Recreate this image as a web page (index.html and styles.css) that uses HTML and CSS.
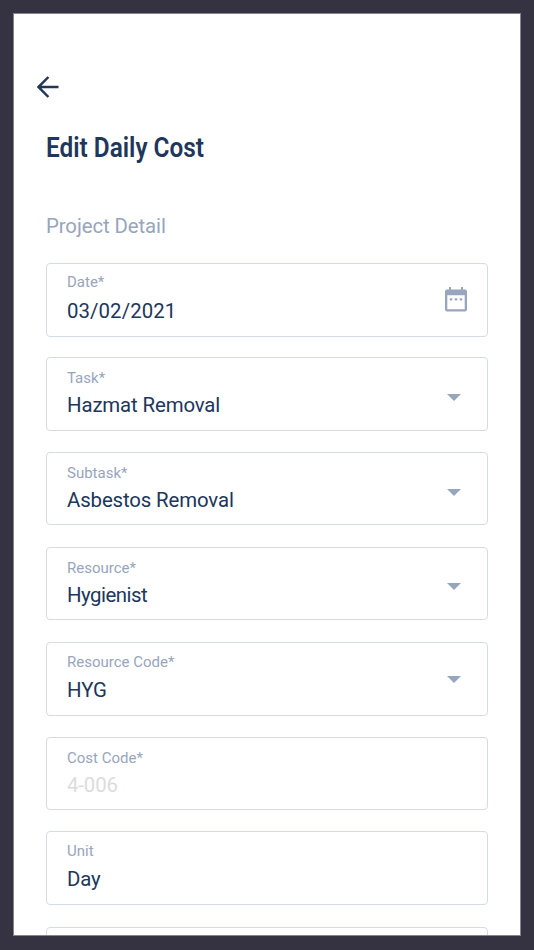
FILE: index.html
```html
<!DOCTYPE html>
<html lang="en">
<head>
  <meta charset="UTF-8">
  <meta name="viewport" content="width=device-width, initial-scale=1.0">
  <title>Edit Daily Cost</title>
  <link rel="stylesheet" href="styles.css">
</head>
<body>
  <main class="screen">
    <a class="back" aria-label="Back">
      <svg width="22" height="22" viewBox="0 0 22 22"><path d="M11.4 1L1.6 11l9.8 10M2 11h19.5" fill="none" stroke="#20365b" stroke-width="2.5"/></svg>
    </a>
    <h1><span class="title">Edit Daily Cost</span></h1>
    <h2>Project Detail</h2>

    <div class="fields">
      <div class="field date">
        <div class="label">Date*</div>
        <div class="value">03/02/2021</div>
        <svg class="calendar" width="22" height="25" viewBox="0 0 22 25">
          <path fill="#97a5bd" fill-rule="evenodd" d="M4 0h2v2.500h10v-2.500h2v2.500h2a2 2 0 0 1 2 2v18a2 2 0 0 1-2 2h-18a2 2 0 0 1-2-2v-18a2 2 0 0 1 2-2h2zM2.300 8.200v14.100h17.400v-14.100zM4.800 11.200h2.400v2.400h-2.400zM9.800 11.200h2.400v2.400h-2.400zM14.800 11.200h2.400v2.400h-2.400z"/>
        </svg>
      </div>
      <div class="field task">
        <div class="label">Task*</div>
        <div class="value">Hazmat Removal</div>
        <span class="arrow"></span>
      </div>
      <div class="field subtask">
        <div class="label">Subtask*</div>
        <div class="value">Asbestos Removal</div>
        <span class="arrow"></span>
      </div>
      <div class="field resource">
        <div class="label">Resource*</div>
        <div class="value">Hygienist</div>
        <span class="arrow"></span>
      </div>
      <div class="field code">
        <div class="label">Resource Code*</div>
        <div class="value">HYG</div>
        <span class="arrow"></span>
      </div>
      <div class="field cost">
        <div class="label">Cost Code*</div>
        <div class="value disabled">4-006</div>
      </div>
      <div class="field unit">
        <div class="label">Unit</div>
        <div class="value">Day</div>
      </div>
      <div class="field last"></div>
    </div>
  </main>
</body>
</html>
```

FILE: styles.css
```css
* {
  box-sizing: border-box;
}
body {
  margin: 0;
  height: 950px;
  padding: 13px 13px 14px;
  background-color: #353241;
  font-family: Roboto, sans-serif;
  overflow: hidden;
}
.screen {
  height: 923px;
  padding: 62px 32px 0;
  background-color: #fff;
  border: 1px solid #85848e;
  overflow: hidden;
}
.back {
  display: block;
  width: 22px;
  height: 22px;
  margin-left: -9px;
}
h1 {
  margin: 33px 0 0;
  height: 34px;
  font-size: 28px;
  line-height: 34px;
  font-weight: 600;
  color: #20365b;
  white-space: nowrap;
}
.title {
  display: inline-block;
  transform: scaleX(0.87);
  transform-origin: left;
}
h2 {
  margin: 48px 0 0;
  height: 26px;
  font-size: 20.4px;
  line-height: 26px;
  letter-spacing: -0.1px;
  font-weight: 400;
  color: #97a5bd;
}
.fields {
  margin-top: 24px;
}
.field {
  position: relative;
  height: 74px;
  margin-top: 21px;
  padding: 11px 20px 0;
  border: 1px solid #d5dae5;
  border-radius: 4px;
}
.label {
  height: 24px;
  font-size: 15px;
  line-height: 18px;
  color: #97a5bd;
}
.value {
  font-size: 20.4px;
  line-height: 24px;
  letter-spacing: -0.13px;
  color: #20365b;
}
.disabled {
  color: #dcdcdc;
}
.date {
  margin-top: 0;
}
.date .value {
  letter-spacing: 0.08px;
}
.task {
  margin-top: 20px;
}
.subtask,
.resource,
.cost {
  height: 73px;
}
.resource,
.last {
  margin-top: 22px;
}
.code {
  margin-top: 22px;
}
.resource .value {
  letter-spacing: -0.5px;
}
.date .label,
.code .label,
.unit .label {
  height: 25px;
  margin-top: -1px;
}
.date .label {
  height: 26px;
  margin-top: -2px;
}
.calendar {
  position: absolute;
  top: 23px;
  right: 20px;
}
.arrow {
  position: absolute;
  top: 36px;
  right: 26px;
  border: 7px solid transparent;
  border-top-color: #97a5bd;
  border-bottom: 0;
}
.resource .arrow {
  top: 35px;
}
.code .arrow {
  top: 33px;
}
```
